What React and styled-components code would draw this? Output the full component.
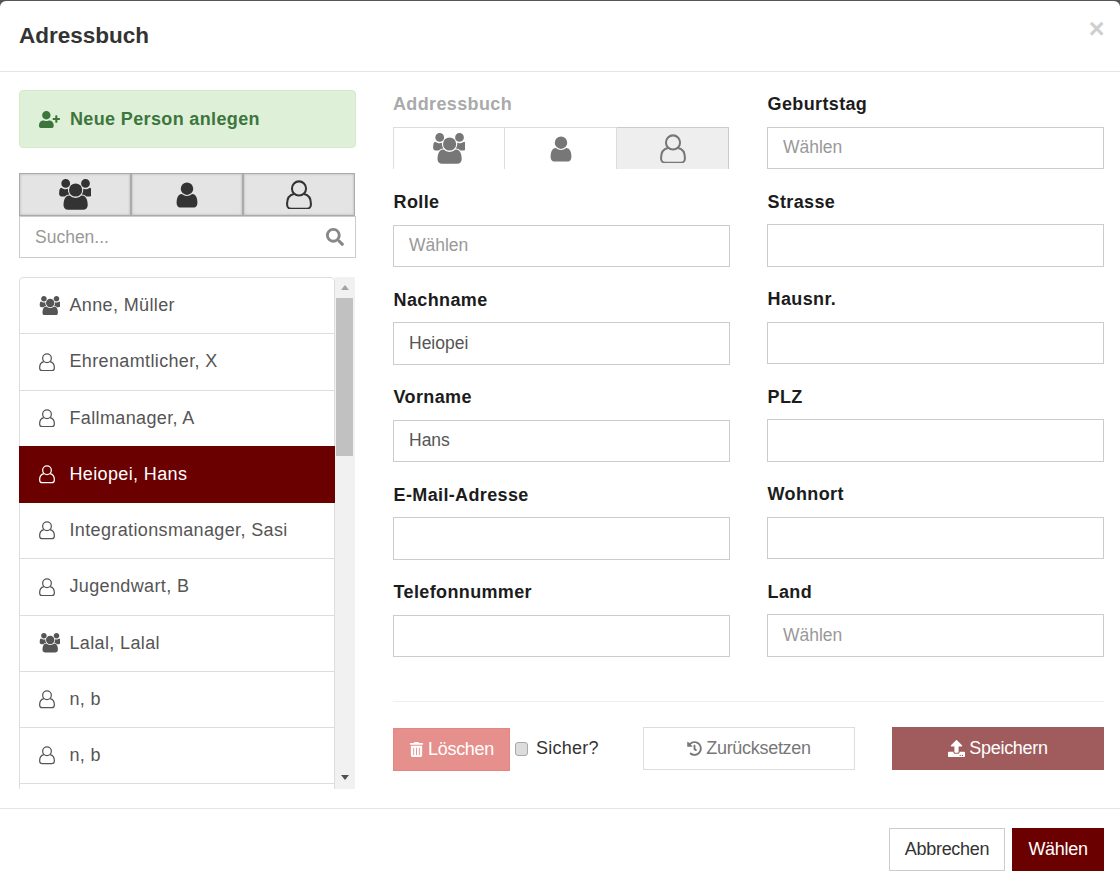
import React from 'react';
import styled, { createGlobalStyle } from 'styled-components';
import { FaSearch, FaTrashAlt, FaHistory, FaUpload, FaUserPlus } from 'react-icons/fa';

const GlobalStyle = createGlobalStyle`
  html, body {
    margin: 0;
    padding: 0;
    background: #555;
  }
  * {
    box-sizing: border-box;
  }
  body {
    font-family: "Liberation Sans", Arial, sans-serif;
    font-size: 18px;
    letter-spacing: 0.36px;
    color: #333;
  }
`;

const Modal = styled.div`
  width: 1120px;
  height: 870px;
  margin-top: 1px;
  background: #fff;
  border-top-left-radius: 6px;
  border-top-right-radius: 6px;
  display: flex;
  flex-direction: column;
  overflow: hidden;
`;

const Header = styled.header`
  height: 71px;
  flex: none;
  border-bottom: 1px solid #e5e5e5;
  padding: 0 15px 0 19px;
  display: flex;
  align-items: center;
  justify-content: space-between;
`;

const Title = styled.h4`
  margin: 0;
  font-size: 22.5px;
  font-weight: 700;
  letter-spacing: 0;
  color: #333;
`;

const Close = styled.span`
  font-size: 27px;
  font-weight: 700;
  line-height: 1;
  color: #cfcfcf;
  margin-top: -14px;
`;

const Body = styled.main`
  flex: 1;
  padding: 18px 16px 19px 19px;
  display: grid;
  grid-template-columns: 337px 711px;
  column-gap: 37px;
  min-height: 0;
`;

const Sidebar = styled.section`
  display: flex;
  flex-direction: column;
  min-height: 0;
`;

const NewPerson = styled.div`
  height: 58px;
  flex: none;
  background: #dff0d8;
  border: 1px solid #d6e9c6;
  border-radius: 4px;
  color: #3c763d;
  font-weight: 700;
  padding-left: 19px;
  display: flex;
  align-items: center;
  gap: 10px;
  margin-bottom: 25px;
`;

const FilterTabs = styled.div`
  display: flex;
  flex: none;
`;

const FilterTab = styled.div`
  width: 112px;
  height: 43px;
  background: #e4e4e4;
  border: 1px solid #aaa;
  box-shadow: inset 0 0 3px rgba(0, 0, 0, 0.2);
  color: #333;
  display: flex;
  align-items: center;
  justify-content: center;
`;

const SearchBox = styled.div`
  height: 42px;
  flex: none;
  border: 1px solid #ccc;
  padding: 0 11px 0 15px;
  display: flex;
  align-items: center;
  justify-content: space-between;
  color: #999;
  margin-bottom: 19px;
`;

const SearchInput = styled.input`
  border: 0;
  outline: 0;
  padding: 0;
  flex: 1;
  min-width: 0;
  font: inherit;
  font-size: 17.5px;
  letter-spacing: 0;
  &::placeholder {
    color: #999;
    opacity: 1;
  }
`;

const ListArea = styled.div`
  height: 512px;
  flex: none;
  display: flex;
  width: 336px;
`;

const List = styled.div`
  width: 316px;
  height: 100%;
  overflow: hidden;
`;

const Item = styled.div`
  position: relative;
  display: flex;
  align-items: center;
  height: 57.25px;
  margin-bottom: -1px;
  padding-left: 19px;
  border: 1px solid ${(p) => (p.$active ? '#6b0000' : '#ddd')};
  border-radius: ${(p) => (p.$first ? '4px 4px 0 0' : '0')};
  background: ${(p) => (p.$active ? '#6b0000' : '#fff')};
  color: ${(p) => (p.$active ? '#fff' : '#555')};
  z-index: ${(p) => (p.$active ? 1 : 0)};
`;

const ItemIcon = styled.span`
  width: 30.5px;
  flex: none;
  display: flex;
  align-items: center;
`;

const Scrollbar = styled.div`
  width: 20px;
  height: 100%;
  background: #f1f1f1;
  display: flex;
  flex-direction: column;
  align-items: center;
  padding: 0 2px 0 1px;
`;

const Arrow = styled.span`
  flex: none;
  width: 0;
  height: 0;
  border-left: 4.5px solid transparent;
  border-right: 4.5px solid transparent;
  border-bottom: ${(p) => (p.$up ? '5px solid #a3a3a3' : '0')};
  border-top: ${(p) => (p.$up ? '0' : '5px solid #505050')};
  margin: ${(p) => (p.$up ? '8px 0 8px' : 'auto 0 9px')};
`;

const Thumb = styled.div`
  width: 17px;
  height: 158px;
  flex: none;
  background: #c1c1c1;
`;

const FormArea = styled.section`
  display: flex;
  flex-direction: column;
`;

const FormGrid = styled.div`
  display: grid;
  grid-template-columns: 337px 337px;
  column-gap: 37px;
  align-items: start;
`;

const FormColumn = styled.div`
  display: grid;
  grid-auto-rows: 97.5px;
  margin-top: ${(p) => (p.$right ? '-0.3px' : '0')};
`;

const Field = styled.div`
  display: flex;
  flex-direction: column;
`;

const Label = styled.label`
  height: 28px;
  line-height: 28px;
  padding: ${(p) => (p.$muted ? '0' : '0.5px 0 0 0.6px')};
  margin-bottom: 9px;
  font-weight: 700;
  color: ${(p) => (p.$muted ? '#aaa' : '#1c1c1c')};
`;

const Input = styled.input`
  width: 100%;
  height: 42.5px;
  border: 1px solid #ccc;
  padding: 0 15px;
  font: inherit;
  font-size: 17.5px;
  letter-spacing: 0;
  color: #555;
  background: #fff;
  outline: 0;
  &::placeholder {
    color: #999;
    opacity: 1;
  }
`;

const TypeTabs = styled.div`
  display: flex;
  height: 42px;
`;

const TypeTab = styled.div`
  width: 112px;
  border: 1px solid ${(p) => (p.$selected ? '#ccc' : '#ddd')};
  border-bottom: 0;
  border-left-width: ${(p) => (p.$first ? '1px' : '0')};
  background: ${(p) => (p.$selected ? '#eee' : '#fff')};
  color: #777;
  display: flex;
  align-items: center;
  justify-content: center;
`;

const Divider = styled.hr`
  width: 100%;
  margin: 26px 0 25px;
  border: 0;
  border-top: 1px solid #eee;
`;

const Actions = styled.div`
  display: grid;
  grid-template-columns: 213px 212px 212px;
  column-gap: 37px;
  align-items: start;
`;

const DeleteGroup = styled.div`
  display: flex;
  align-items: center;
  white-space: nowrap;
`;

const Button = styled.button`
  height: 43px;
  width: ${(p) => p.$width || '100%'};
  border: 1px solid ${(p) => p.$border};
  background: ${(p) => p.$bg};
  color: ${(p) => p.$color};
  font: inherit;
  letter-spacing: -0.3px;
  padding: 0;
  display: inline-flex;
  align-items: center;
  justify-content: center;
  flex: none;
  gap: 4px;
`;

const DeleteButton = styled(Button)`
  margin-top: 1px;
`;

const Check = styled.input`
  appearance: none;
  width: 13px;
  height: 14px;
  margin: 0 8px 0 5px;
  flex: none;
  background: #dcdcdc;
  border: 1px solid #a9a9a9;
  border-radius: 3px;
`;

const SureLabel = styled.span`
  color: #333;
  letter-spacing: 0.25px;
  margin-top: -2px;
`;

const Footer = styled.footer`
  height: 63px;
  flex: none;
  border-top: 1px solid #e5e5e5;
  padding: 19px 16px 0 0;
  display: flex;
  justify-content: flex-end;
  gap: 7px;
`;

const GroupGlyph = styled.svg`
  margin-left: ${(p) => (p.$nudge ? '-1px' : '0')};
`;

const users = 'M657 896q-162 5-265 128h-134q-82 0-138-40.500t-56-118.500q0-353 124-353 6 0 43.500 21t97.500 42.500 119 21.500q67 0 133-23-5 37-5 66 0 139 81 256zm1071 637q0 120-73 189.500t-194 69.500h-874q-121 0-194-69.500t-73-189.500q0-53 3.500-103.500t14-109 26.500-108.500 43-97.500 62-81 85.500-53.500 111.500-20q10 0 43 21.500t73 48 107 48 135 21.500 135-21.500 107-48 73-48 43-21.500q61 0 111.500 20t85.500 53.500 62 81 43 97.500 26.500 108.500 14 109 3.500 103.500zm-1024-1277q0 106-75 181t-181 75-181-75-75-181 75-181 181-75 181 75 75 181zm704 384q0 159-112.500 271.500t-271.500 112.500-271.500-112.500-112.500-271.500 112.500-271.500 271.500-112.500 271.500 112.500 112.500 271.500zm576 225q0 78-56 118.500t-138 40.500h-134q-103-123-265-128 81-117 81-256 0-29-5-66 66 23 133 23 59 0 119-21.500t97.500-42.500 43.500-21q124 0 124 353zm-128-609q0 106-75 181t-181 75-181-75-75-181 75-181 181-75 181 75 75 181z';

const user = 'M1536 1399q0 109-62.500 187t-150.500 78h-854q-88 0-150.500-78t-62.500-187q0-85 8.500-160.500t31.500-152 58.500-131 94-89 134.500-34.500q131 128 313 128t313-128q76 0 134.500 34.500t94 89 58.500 131 31.500 152 8.500 160.500zm-256-887q0 159-112.500 271.500t-271.500 112.500-271.500-112.500-112.500-271.500 112.500-271.500 271.500-112.500 271.500 112.500 112.500 271.500z';

const UsersIcon = ({ size, nudge }) => (
  <GroupGlyph $nudge={nudge} width={size} height={size * 0.933} viewBox="0 0 1920 1792" fill="currentColor">
    <path d={users} />
  </GroupGlyph>
);

const UserIcon = ({ size }) => (
  <svg width={size} height={size} viewBox="200 100 1392 1600" fill="currentColor">
    <path d={user} />
  </svg>
);

const UserOutline = ({ size }) => (
  <svg width={size} height={size * 1.15} viewBox="0 0 28 32" fill="none" stroke="currentColor" strokeWidth="2.2">
    <circle cx="14" cy="9" r="7.6" />
    <path d="M8.5 15C4.500 16 1.200 19.500 1.200 25v1.500c0 2.500 2 4.300 4.300 4.300h17c2.300 0 4.300-1.800 4.300-4.300V25c0-5.500-3.300-9-7.300-10" />
  </svg>
);

const people = [
  { name: 'Anne, Müller', group: true },
  { name: 'Ehrenamtlicher, X' },
  { name: 'Fallmanager, A' },
  { name: 'Heiopei, Hans', active: true },
  { name: 'Integrationsmanager, Sasi' },
  { name: 'Jugendwart, B' },
  { name: 'Lalal, Lalal', group: true },
  { name: 'n, b' },
  { name: 'n, b' },
  { name: '', blank: true },
];

const leftFields = [
  { label: 'Rolle', placeholder: 'Wählen' },
  { label: 'Nachname', value: 'Heiopei' },
  { label: 'Vorname', value: 'Hans' },
  { label: 'E-Mail-Adresse' },
  { label: 'Telefonnummer' },
];

const rightFields = [
  { label: 'Geburtstag', placeholder: 'Wählen' },
  { label: 'Strasse' },
  { label: 'Hausnr.' },
  { label: 'PLZ' },
  { label: 'Wohnort' },
  { label: 'Land', placeholder: 'Wählen' },
];

const renderField = (f) => (
  <Field key={f.label}>
    <Label>{f.label}</Label>
    <Input readOnly placeholder={f.placeholder} value={f.value || ''} />
  </Field>
);

export default function App() {
  return (
    <>
      <GlobalStyle />
      <Modal>
        <Header>
          <Title>Adressbuch</Title>
          <Close>×</Close>
        </Header>
        <Body>
          <Sidebar>
            <NewPerson>
              <FaUserPlus size={21} />
              Neue Person anlegen
            </NewPerson>
            <FilterTabs>
              <FilterTab><UsersIcon size={33} nudge /></FilterTab>
              <FilterTab><UserIcon size={26} /></FilterTab>
              <FilterTab><UserOutline size={26} /></FilterTab>
            </FilterTabs>
            <SearchBox>
              <SearchInput readOnly placeholder="Suchen..." />
              <FaSearch size={18} color="#888" />
            </SearchBox>
            <ListArea>
              <List>
                {people.map((p, i) => (
                  <Item key={i} $first={i === 0} $active={p.active}>
                    {!p.blank && (
                      <ItemIcon>
                        {p.group ? <UsersIcon size={21} /> : <UserOutline size={16} />}
                      </ItemIcon>
                    )}
                    {p.name}
                  </Item>
                ))}
              </List>
              <Scrollbar>
                <Arrow $up />
                <Thumb />
                <Arrow />
              </Scrollbar>
            </ListArea>
          </Sidebar>
          <FormArea>
            <FormGrid>
              <FormColumn>
                <Field>
                  <Label $muted>Addressbuch</Label>
                  <TypeTabs>
                    <TypeTab $first><UsersIcon size={33} nudge /></TypeTab>
                    <TypeTab><UserIcon size={26} /></TypeTab>
                    <TypeTab $selected><UserOutline size={26} /></TypeTab>
                  </TypeTabs>
                </Field>
                {leftFields.map(renderField)}
              </FormColumn>
              <FormColumn $right>
                {rightFields.map(renderField)}
              </FormColumn>
            </FormGrid>
            <Divider />
            <Actions>
              <DeleteGroup>
                <DeleteButton $width="117px" $bg="#e6908d" $border="#e58683" $color="#fff">
                  <FaTrashAlt size={15} />
                  Löschen
                </DeleteButton>
                <Check type="checkbox" disabled />
                <SureLabel>Sicher?</SureLabel>
              </DeleteGroup>
              <Button $bg="#fff" $border="#ddd" $color="#777">
                <FaHistory size={15} />
                Zurücksetzen
              </Button>
              <Button $bg="#a05c5c" $border="#a05c5c" $color="#fff">
                <FaUpload size={17} />
                Speichern
              </Button>
            </Actions>
          </FormArea>
        </Body>
        <Footer>
          <Button $width="116px" $bg="#fff" $border="#ccc" $color="#333">Abbrechen</Button>
          <Button $width="92px" $bg="#6b0000" $border="#6b0000" $color="#fff">Wählen</Button>
        </Footer>
      </Modal>
    </>
  );
}
